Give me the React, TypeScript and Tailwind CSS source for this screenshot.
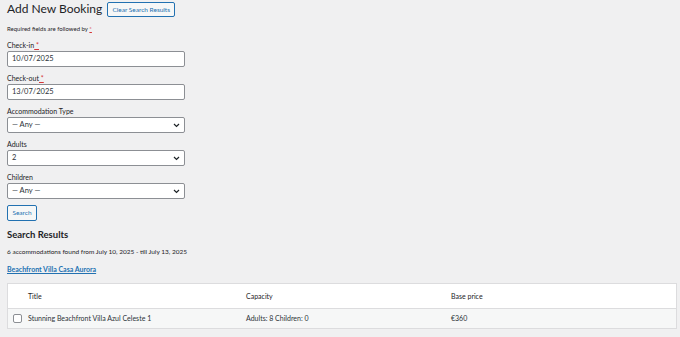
import React from "react";

const font = { fontFamily: 'Lato, "Noto Sans", sans-serif' };

function Chevron() {
  return (
    <svg width="7" height="5" viewBox="0 0 7 5" className="absolute right-[4px] top-[5px]">
      <path d="M1 1 L3.5 3.5 L6 1" fill="none" stroke="#1d2327" strokeWidth="1.2" />
    </svg>
  );
}

function Field({ label, req, value, select }: { label: string; req?: boolean; value: string; select?: boolean }) {
  return (
    <div className="flex flex-col">
      <div className="text-[7px] leading-[9px] text-[#1d2327] h-[10px]">
        {label}
        {req && <span className="text-[#d63638] underline"> *</span>}
      </div>
      <div className="relative w-[178px] h-[16px] bg-white border border-[#8c8f94] rounded-[2px] text-[7.5px] leading-[14px] text-[#2c3338] pl-[4px]">
        {value}
        {select && <Chevron />}
      </div>
    </div>
  );
}

export default function App() {
  return (
    <div className="w-[680px] h-[337px] bg-[#f0f0f1] overflow-hidden text-[#1d2327]" style={font}>
      <div className="pl-[7px] pt-[1px]">
        <div className="flex items-center gap-[5px] h-[16px]">
          <h1 className="text-[12px] leading-[16px] text-[#1d2327]">Add New Booking</h1>
          <button className="h-[15px] w-[68px] border border-[#2271b1] text-[#2271b1] bg-[#f6f7f7] rounded-[2px] text-[6.5px] leading-[13px]">
            Clear Search Results
          </button>
        </div>
        <div className="mt-[8px] text-[6px] leading-[8px]">
          Required fields are followed by <span className="text-[#d63638] underline">*</span>
        </div>
        <div className="mt-[8px] flex flex-col gap-[7px]">
          <Field label="Check-in" req value="10/07/2025" />
          <Field label="Check-out" req value="13/07/2025" />
          <Field label="Accommodation Type" value="— Any —" select />
          <Field label="Adults" value="2" select />
          <Field label="Children" value="— Any —" select />
        </div>
        <button className="mt-[6px] h-[16px] w-[30px] border border-[#2271b1] text-[#2271b1] bg-[#f6f7f7] rounded-[2px] text-[6.5px] leading-[14px] block">
          Search
        </button>
        <h2 className="mt-[8px] text-[9.5px] leading-[12px] font-bold text-[#1d2327]">Search Results</h2>
        <div className="mt-[6px] text-[6.5px] leading-[9px]">
          6 accommodations found from July 10, 2025 - till July 13, 2025
        </div>
        <div className="mt-[9px] text-[7px] leading-[9px] font-bold text-[#2271b1] underline">
          Beachfront Villa Casa Aurora
        </div>
        <div className="mt-[9px] w-[670px] border border-[#dcdcde] bg-white text-[7px]">
          <div className="flex h-[25px] items-center border-b border-[#dcdcde]">
            <div className="w-[238px] pl-[20px]">Title</div>
            <div className="w-[205px]">Capacity</div>
            <div>Base price</div>
          </div>
          <div className="flex h-[19px] items-center bg-[#f6f7f7] text-[#2c3338]">
            <div className="w-[238px] pl-[5px] flex items-center gap-[6px]">
              <span className="w-[9px] h-[9px] border border-[#8c8f94] rounded-[2px] bg-white inline-block" />
              <span>Stunning Beachfront Villa Azul Celeste 1</span>
            </div>
            <div className="w-[205px]">Adults: 8 Children: 0</div>
            <div>€360</div>
          </div>
        </div>
      </div>
    </div>
  );
}
